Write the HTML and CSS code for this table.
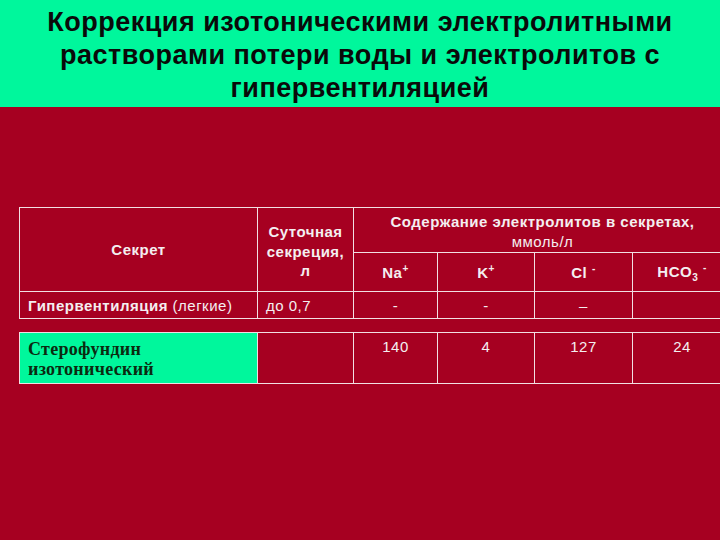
FILE: index.html
```html
<!DOCTYPE html>
<html lang="ru">
<head>
<meta charset="utf-8">
<link rel="stylesheet" href="styles.css">
</head>
<body>
<header class="title">
  <h1>Коррекция изотоническими электролитными растворами потери воды и электролитов с гипервентиляцией</h1>
</header>
<main class="content">
  <table class="grid top">
    <colgroup>
      <col class="c1"><col class="c2"><col class="c3"><col class="c4"><col class="c5"><col class="c6">
    </colgroup>
    <tr class="h1">
      <th rowspan="2" class="b">Секрет</th>
      <th rowspan="2" class="b daily">Суточная секреция, л</th>
      <th colspan="4" class="group"><span class="b">Содержание электролитов в секретах,</span><br><span class="n">ммоль/л</span></th>
    </tr>
    <tr class="h2">
      <th class="b ion">Na<sup>+</sup></th>
      <th class="b ion">K<sup>+</sup></th>
      <th class="b ion">Cl <sup>-</sup></th>
      <th class="b ion">HCO<sub>3</sub> <sup>-</sup></th>
    </tr>
    <tr class="r1">
      <td class="left"><span class="b">Гипервентиляция</span> (легкие)</td>
      <td class="left">до 0,7</td>
      <td>-</td>
      <td>-</td>
      <td>–</td>
      <td></td>
    </tr>
  </table>
  <table class="grid bottom">
    <colgroup>
      <col class="c1"><col class="c2"><col class="c3"><col class="c4"><col class="c5"><col class="c6">
    </colgroup>
    <tr class="r2">
      <td class="drug">Стерофундин изотонический</td>
      <td></td>
      <td>140</td>
      <td>4</td>
      <td>127</td>
      <td>24</td>
    </tr>
  </table>
</main>
</body>
</html>
```
FILE: styles.css
```css
html, body {
  margin: 0;
  padding: 0;
}
body {
  width: 720px;
  height: 540px;
  overflow: hidden;
  background: #a60021;
  font-family: "Liberation Sans", Arial, sans-serif;
  color: #f4eef0;
}
.title {
  background: #00f79c;
  height: 107px;
  box-sizing: border-box;
  padding-top: 6px;
}
.title h1 {
  margin: 0 auto;
  width: 680px;
  text-align: center;
  font-size: 27px;
  line-height: 33px;
  letter-spacing: 0.5px;
  font-weight: bold;
  color: #0a0a0a;
}
.content {
  padding: 100px 0 0 19px;
}
.grid {
  border-collapse: collapse;
  table-layout: fixed;
  width: 712px;
  font-size: 15px;
  letter-spacing: 0.5px;
}
.grid col.c1 { width: 238px; }
.grid col.c2 { width: 96px; }
.grid col.c3 { width: 84px; }
.grid col.c4 { width: 97px; }
.grid col.c5 { width: 98px; }
.grid col.c6 { width: 99px; }
.grid th, .grid td {
  border: 1px solid #f2dfe3;
  padding: 0;
  text-align: center;
  vertical-align: middle;
}
.b { font-weight: bold; }
.n { font-weight: normal; }
th { font-weight: normal; }
.h1 { height: 45px; }
.h1 th { line-height: 20px; }
.h1 th.daily { padding: 4px 2px 0 2px; line-height: 19.5px; }
.h1 th.group { vertical-align: top; padding-top: 4px; }
.h2 { height: 39px; }
.ion { padding-top: 2px; }
.ion sup, .ion sub { font-size: 10px; }
.r1 { height: 27px; }
.r1 td { padding-top: 1px; }
.grid td.left { text-align: left; padding-left: 8px; }
.bottom { margin-top: 13px; }
.r2 { height: 51px; }
.r2 td { vertical-align: top; padding-top: 5px; line-height: 18px; }
.r2 td.drug {
  background: #00f79c;
  color: #0b2a10;
  font-family: "Liberation Serif", "Times New Roman", serif;
  font-weight: bold;
  font-size: 18px;
  line-height: 20px;
  letter-spacing: 0.3px;
  text-align: left;
  padding: 6px 8px 4px 8px;
}
```
